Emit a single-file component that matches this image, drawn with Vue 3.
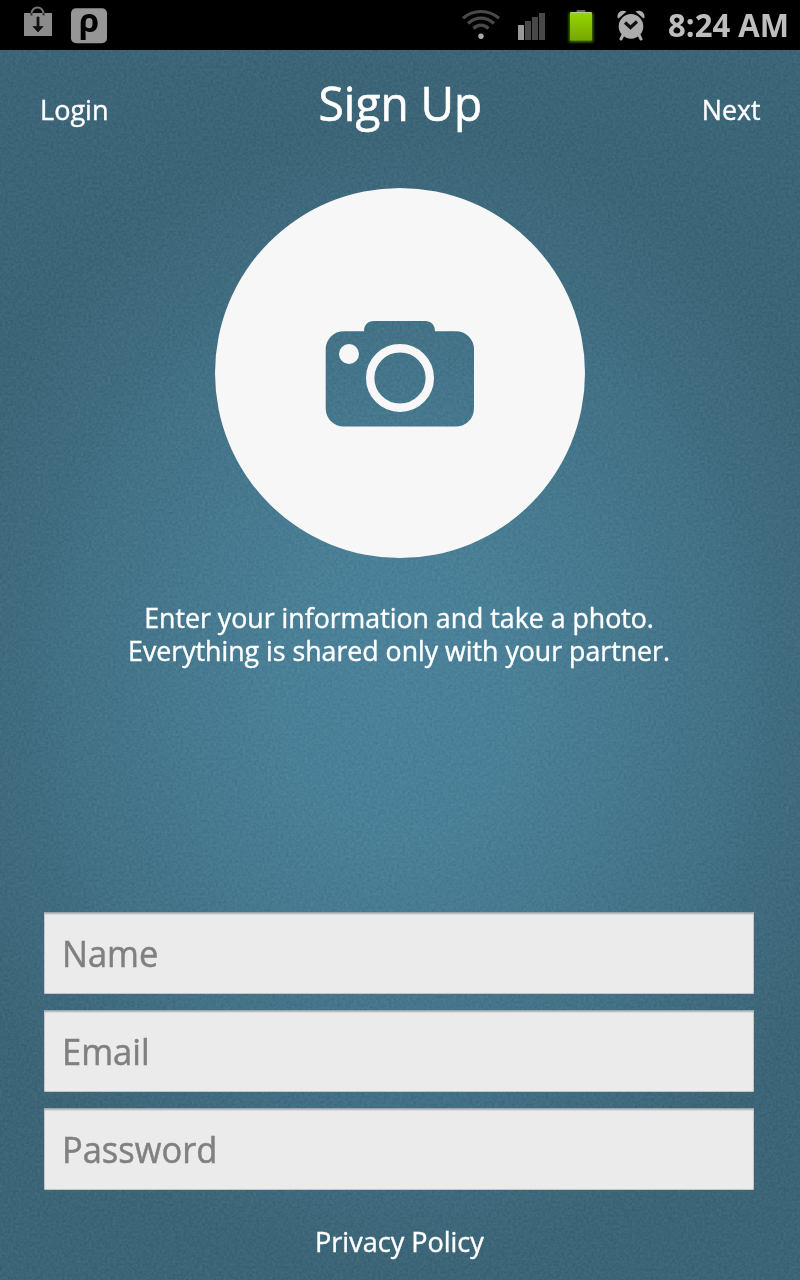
<script setup>
const fields = [
  { label: 'Name', cls: 'name' },
  { label: 'Email', cls: 'email' },
  { label: 'Password', cls: 'password' },
]
</script>

<template>
  <div class="screen">
    <svg class="grain" width="800" height="1230" aria-hidden="true">
      <filter id="grain" x="0" y="0" width="100%" height="100%" color-interpolation-filters="sRGB">
        <feTurbulence type="fractalNoise" baseFrequency="0.37" numOctaves="3" seed="4" />
        <feColorMatrix type="matrix" values="1.5 1.5 0 0 -1  1.5 1.5 0 0 -1  1.5 1.5 0 0 -1  0 0 0 0 1" />
      </filter>
      <rect width="800" height="1230" filter="url(#grain)" />
    </svg>
    <header class="status">
      <svg class="bag" width="30" height="32" viewBox="0 0 30 32">
        <path d="M8.500 10V8.500a6 6 0 0 1 12 0V10" fill="none" stroke="#777" stroke-width="1.8" />
        <path d="M1 8h28v23H1z" fill="#8b8b8b" />
        <path d="M8.500 10.500V8M20.500 10.500V8" stroke="#333" stroke-width="2" />
        <path d="M14 12h2v9.500h4l-5 5.500-5-5.500h4z" fill="#111" stroke="#111" stroke-width=".8" />
      </svg>
      <svg class="badge" width="36" height="36" viewBox="0 0 36 36">
        <rect y=".3" width="36" height="35" rx="5" fill="#969696" />
        <text x="18" y="23.500" text-anchor="middle" class="rho">ρ</text>
      </svg>
      <svg class="wifi" width="40" height="34" viewBox="0 0 40 34">
        <g fill="none" stroke="#494949" stroke-width="3.200">
          <path d="M2 13.200Q10 6.500 20 6.500T38 13.200" />
          <path d="M7 18.500Q13 13.200 20 13.200T33 18.500" />
          <path d="M12.500 23.500Q16 20.200 20 20.200T27.500 23.500" />
        </g>
        <circle cx="20" cy="31.300" r="2.700" fill="#aaa" />
      </svg>
      <svg class="signal" width="28" height="28" viewBox="0 0 28 28">
        <rect y="12" width="6" height="15" fill="#999" />
        <path d="M7 8h6v19H7zM14 4h6v23h-6zM21 0h6v27h-6z" fill="#484848" />
      </svg>
      <svg class="battery" width="34" height="40" viewBox="0 0 34 40">
        <defs>
          <linearGradient id="charge" x2="0" y2="1">
            <stop stop-color="#96d800" /><stop offset="1" stop-color="#76a500" />
          </linearGradient>
          <filter id="glow" x="-30%" y="-30%" width="160%" height="160%"><feGaussianBlur stdDeviation="1.5" /></filter>
        </defs>
        <rect x="5" y="8" width="24" height="29" fill="#5fa800" filter="url(#glow)" opacity=".8" />
        <path d="M12 8l1-3h8l1 3z" fill="#666" />
        <rect x="6" y="7" width="22" height="28.500" rx="1" fill="url(#charge)" />
        <path d="M7 7.500h20" stroke="#b7cc91" stroke-width="1" />
      </svg>
      <svg class="alarm" width="30" height="32" viewBox="0 0 30 32">
        <g fill="#acacac" stroke="#acacac">
          <circle cx="15" cy="17.400" r="12.300" stroke="none" />
          <path d="M7 26l-2 4M23 26l2 4" stroke-width="3" stroke-linecap="round" />
          <path d="M1.500 8.500C1 3 6 .500 10.500 2.500L2.500 9.500zM28.500 8.500C29 3 24 .500 19.500 2.500L27.500 9.500z" stroke="none" />
        </g>
        <path d="M9 13.500l5.500 5 6.500-6" fill="none" stroke="#111" stroke-width="3.200" />
      </svg>
      <span class="time">8:24 AM</span>
    </header>

    <nav class="nav">
      <span class="login">Login</span>
      <h1>Sign Up</h1>
      <span class="next">Next</span>
    </nav>

    <svg class="photo" width="370" height="370" viewBox="0 0 370 370">
      <mask id="camera">
        <rect width="370" height="370" fill="#fff" />
        <path d="M128.700 143.200H149C149 137 153 133 159 133H210C216 133 220 137 220 143.200H241A18 18 0 0 1 259 161.200V220.600A18 18 0 0 1 241 238.600H128.700A18 18 0 0 1 110.700 220.600V161.200A18 18 0 0 1 128.700 143.200Z" fill="#000" />
        <circle cx="134" cy="166" r="10" fill="#fff" />
        <circle cx="185" cy="190" r="29.800" fill="none" stroke="#fff" stroke-width="8.400" />
      </mask>
      <circle cx="185" cy="185" r="185" fill="#f7f7f7" mask="url(#camera)" />
    </svg>

    <p class="info">Enter your information and take a photo.<br>Everything is shared only with your partner.</p>

    <form class="form">
      <div v-for="f in fields" :key="f.label" class="field"><span :class="f.cls">{{ f.label }}</span></div>
    </form>
    <footer><span class="privacy">Privacy Policy</span></footer>
  </div>
</template>

<style>
html, body { margin: 0; background: #3c6679; }
</style>

<style scoped>
.screen {
  position: relative; isolation: isolate;
  width: 800px; height: 1280px; overflow: hidden;
  display: flex; flex-direction: column; align-items: center;
  font-family: "Open Sans", "Noto Sans", sans-serif; color: #fff;
  background: radial-gradient(ellipse 480px 575px at 400px 695px, #4b8299 0%, #4a8097 25%, #447489 60%, #3e687b 90%, #3c6578 100%);
}
.grain { position: absolute; left: 0; top: 50px; z-index: -1; opacity: .09; mix-blend-mode: soft-light; }
.status { width: 800px; height: 50px; flex: none; background: #000; display: flex; align-items: flex-start; }
.status > * { flex: none; }
.bag { margin: 5px 0 0 23px; }
.badge { margin: 8px 0 0 18px; overflow: visible; }
.rho { font: bold 33px "Open Sans", sans-serif; fill: #000; }
.wifi { margin: 5px 0 0 354px; }
.signal { margin: 13px 0 0 17px; }
.battery { margin: 5px 0 0 18px; }
.alarm { margin: 9px 0 0 18px; }
.time { margin-left: 22px; color: #bebebe; font: bold 32px/50px "Open Sans", sans-serif; white-space: nowrap; transform: scaleX(.972); transform-origin: left; }
.nav { width: 720px; height: 138px; flex: none; display: grid; grid-template-columns: 1fr auto 1fr; align-items: start; font-size: 28px; line-height: 38px; }
.nav > span { margin-top: 40px; -webkit-text-stroke: .4px #fff; }
.login { justify-self: start; transform: scaleX(.967); transform-origin: left; }
.next { justify-self: end; transform: scaleX(.955); transform-origin: right; }
h1 { margin: 20px 0 0; font-weight: 400; font-size: 48px; line-height: 66px; transform: scaleX(.958); -webkit-text-stroke: .6px #fff; }
.photo { flex: none; }
.info { margin: 43px 2px 0 0; height: 66px; flex: none; text-align: center; font-size: 28px; line-height: 33px; white-space: nowrap; transform: scaleX(.954); -webkit-text-stroke: .4px #fff; }
.form { width: 710px; margin: 245px 2px 0 0; display: flex; flex-direction: column; gap: 16px; }
.field { box-sizing: border-box; height: 82px; padding-left: 18px; background: #ebebeb; color: #808080; font-size: 36px; line-height: 84px; border-radius: 2px; box-shadow: inset 0 1px #9da4ab, inset 0 2px #bcbec3, inset 0 3px #dadbdc, inset 1px 0 #c3c6c9, inset -1px 0 #c3c6c9, inset 0 -1px #c3c6c9; }
.field span { display: inline-block; transform: scaleX(.957); transform-origin: left; -webkit-text-stroke: .5px #808080; }
footer { margin: 32px 2px 0 0; font-size: 28px; line-height: 38px; transform: scaleX(.965); -webkit-text-stroke: .4px #fff; }
</style>
